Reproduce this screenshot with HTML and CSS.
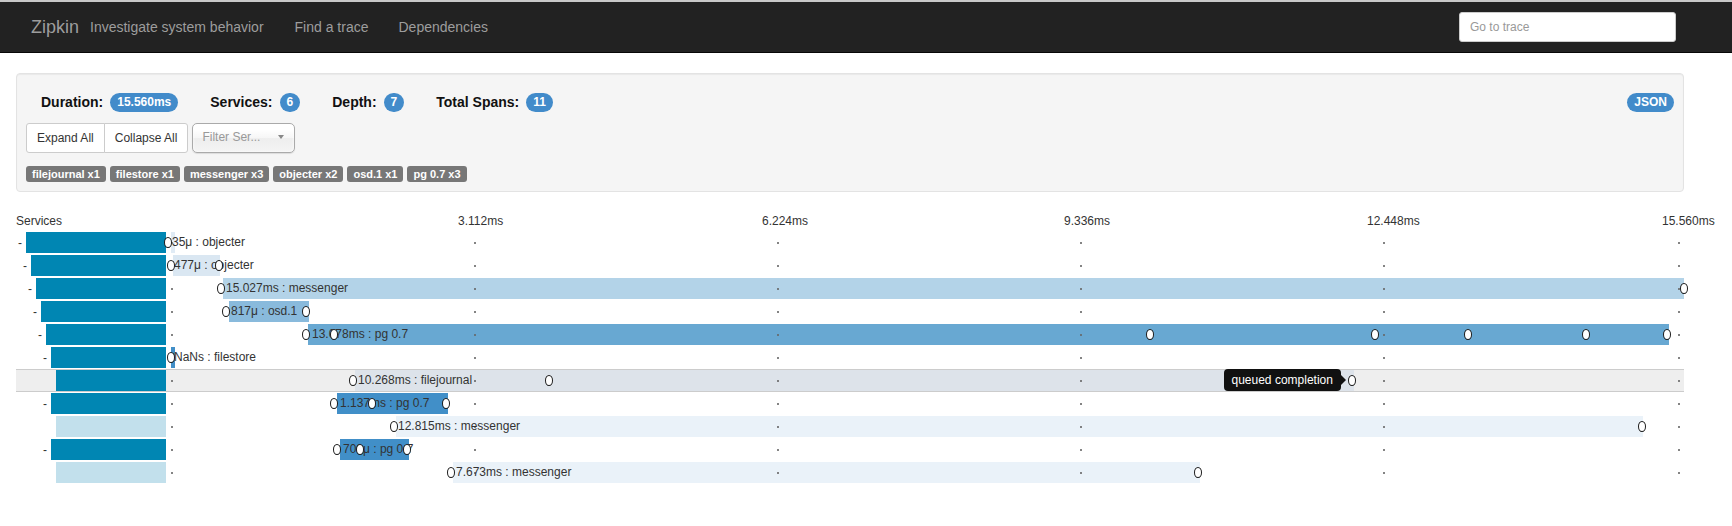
FILE: index.html
```html
<!DOCTYPE html>
<html lang="en">
<head>
<meta charset="utf-8">
<title>Zipkin</title>
<link rel="stylesheet" href="styles.css">
</head>
<body>
<header class="navbar">
  <a class="brand" href="#">Zipkin</a>
  <span class="tagline">Investigate system behavior</span>
  <nav class="nav-links"><a href="#">Find a trace</a><a href="#">Dependencies</a></nav>
  <input class="goto" type="text" placeholder="Go to trace">
</header>

<main class="page">
  <section class="summary">
    <div class="stats">
      <div class="stat">Duration:<span class="badge">15.560ms</span></div>
      <div class="stat">Services:<span class="badge">6</span></div>
      <div class="stat">Depth:<span class="badge">7</span></div>
      <div class="stat">Total Spans:<span class="badge">11</span></div>
      <a class="badge json" href="#">JSON</a>
    </div>
    <div class="controls">
      <div class="btn-group"><button class="btn">Expand All</button><button class="btn">Collapse All</button></div>
      <div class="filter"><span class="filter-text">Filter Ser...</span><span class="caret"></span></div>
    </div>
    <div class="tags">
      <span class="tag">filejournal x1</span>
      <span class="tag">filestore x1</span>
      <span class="tag">messenger x3</span>
      <span class="tag">objecter x2</span>
      <span class="tag">osd.1 x1</span>
      <span class="tag">pg 0.7 x3</span>
    </div>
  </section>

  <section class="trace">
    <div class="trace-head">
      <div class="svc-col">Services</div>
      <div class="canvas">
        <span class="tick-label" style="left:292px">3.112ms</span>
        <span class="tick-label" style="left:596px">6.224ms</span>
        <span class="tick-label" style="left:898px">9.336ms</span>
        <span class="tick-label" style="left:1201px">12.448ms</span>
        <span class="tick-label" style="left:1496px">15.560ms</span>
      </div>
    </div>

    <div class="row">
      <div class="svc"><span class="dash">-</span><span class="svc-bar" style="--d:0"></span></div>
      <div class="canvas">
        <span class="span-bar tone-a" style="left:5px;width:4px"></span>
        <span class="span-label" style="left:6px">35μ : objecter</span>
        <i class="ann" style="left:2px"></i>
      </div>
    </div>

    <div class="row">
      <div class="svc"><span class="dash">-</span><span class="svc-bar" style="--d:1"></span></div>
      <div class="canvas">
        <span class="span-bar tone-b" style="left:7px;width:47px"></span>
        <span class="span-label" style="left:8px">477μ : objecter</span>
        <i class="ann" style="left:4.5px"></i><i class="ann" style="left:52.5px"></i>
      </div>
    </div>

    <div class="row">
      <div class="svc"><span class="dash">-</span><span class="svc-bar" style="--d:2"></span></div>
      <div class="canvas">
        <span class="span-bar tone-c" style="left:57px;width:1461px"></span>
        <span class="span-label" style="left:60px">15.027ms : messenger</span>
        <i class="ann" style="left:54.5px"></i><i class="ann" style="left:1517.5px"></i>
      </div>
    </div>

    <div class="row">
      <div class="svc"><span class="dash">-</span><span class="svc-bar" style="--d:3"></span></div>
      <div class="canvas">
        <span class="span-bar tone-d" style="left:63px;width:80px"></span>
        <span class="span-label" style="left:65px">817μ : osd.1</span>
        <i class="ann" style="left:60px"></i><i class="ann" style="left:140px"></i>
      </div>
    </div>

    <div class="row">
      <div class="svc"><span class="dash">-</span><span class="svc-bar" style="--d:4"></span></div>
      <div class="canvas">
        <span class="span-bar tone-e" style="left:142px;width:1361px"></span>
        <span class="span-label" style="left:146px">13.078ms : pg 0.7</span>
        <i class="ann" style="left:139.5px"></i><i class="ann" style="left:167.5px"></i><i class="ann" style="left:984px"></i><i class="ann" style="left:1208.7px"></i><i class="ann" style="left:1301.7px"></i><i class="ann" style="left:1420px"></i><i class="ann" style="left:1500.7px"></i>
      </div>
    </div>

    <div class="row">
      <div class="svc"><span class="dash">-</span><span class="svc-bar" style="--d:5"></span></div>
      <div class="canvas">
        <span class="span-bar tone-f" style="left:5px;width:4px"></span>
        <span class="span-label" style="left:8px">NaNs : filestore</span>
        <i class="ann" style="left:4.5px"></i>
      </div>
    </div>

    <div class="row hover">
      <div class="svc"><span class="svc-bar" style="--d:6"></span></div>
      <div class="canvas">
        <span class="span-bar tone-h" style="left:189px;width:999px"></span>
        <span class="span-label" style="left:192px">10.268ms : filejournal</span>
        <i class="ann" style="left:186.5px"></i><i class="ann" style="left:383px"></i><i class="ann" style="left:1185.8px"></i>
        <span class="tip" style="left:1057.5px">queued completion</span>
      </div>
    </div>

    <div class="row">
      <div class="svc"><span class="dash">-</span><span class="svc-bar" style="--d:5"></span></div>
      <div class="canvas">
        <span class="span-bar tone-f" style="left:171px;width:111px"></span>
        <span class="span-label" style="left:174px">1.137ms : pg 0.7</span>
        <i class="ann" style="left:168px"></i><i class="ann" style="left:206px"></i><i class="ann" style="left:280px"></i>
      </div>
    </div>

    <div class="row">
      <div class="svc"><span class="svc-bar light" style="--d:6"></span></div>
      <div class="canvas">
        <span class="span-bar tone-g" style="left:230px;width:1247px"></span>
        <span class="span-label" style="left:232px">12.815ms : messenger</span>
        <i class="ann" style="left:227.5px"></i><i class="ann" style="left:1475.6px"></i>
      </div>
    </div>

    <div class="row">
      <div class="svc"><span class="dash">-</span><span class="svc-bar" style="--d:5"></span></div>
      <div class="canvas">
        <span class="span-bar tone-f" style="left:174px;width:69px"></span>
        <span class="span-label" style="left:177px">700μ : pg 0.7</span>
        <i class="ann" style="left:170.7px"></i><i class="ann" style="left:194px"></i><i class="ann" style="left:241px"></i>
      </div>
    </div>

    <div class="row">
      <div class="svc"><span class="svc-bar light" style="--d:6"></span></div>
      <div class="canvas">
        <span class="span-bar tone-g" style="left:287px;width:747px"></span>
        <span class="span-label" style="left:290px">7.673ms : messenger</span>
        <i class="ann" style="left:284.5px"></i><i class="ann" style="left:1032px"></i>
      </div>
    </div>
  </section>
</main>
</body>
</html>
```

FILE: styles.css
```css
* { box-sizing: border-box; }
html, body { margin: 0; }
body {
  font-family: "Liberation Sans", Arial, Helvetica, sans-serif;
  font-size: 14px;
  color: #333;
  background: #fff;
}

/* ---------- navbar ---------- */
.navbar {
  display: flex;
  align-items: center;
  height: 53px;
  background: #222;
  border-top: 2px solid #c8c8c8;
  border-bottom: 1px solid #080808;
  padding-left: 31px;
  margin-bottom: 20px;
}
.brand {
  font-size: 18px;
  line-height: 20px;
  color: #9d9d9d;
  text-decoration: none;
}
.tagline { margin-left: 11px; color: #9d9d9d; }
.nav-links { display: flex; gap: 30px; margin-left: 31px; }
.nav-links a { color: #9d9d9d; text-decoration: none; }
.goto {
  margin-left: auto;
  margin-right: 56px;
  width: 217px;
  height: 30px;
  padding: 0 10px;
  border: 1px solid #ccc;
  border-radius: 3px;
  background: #fff;
  font: 12px "Liberation Sans", Arial, sans-serif;
  color: #555;
  outline: none;
}
.goto::placeholder { color: #999; }

/* ---------- page ---------- */
.page { margin: 0 48px 0 16px; }

.summary {
  background: #f5f5f5;
  border: 1px solid #e3e3e3;
  border-radius: 4px;
  box-shadow: inset 0 1px 1px rgba(0, 0, 0, .05);
  padding: 18px 9px 9px;
  margin-bottom: 19px;
}
.stats {
  display: flex;
  align-items: center;
  height: 20px;
  padding-left: 15px;
}
.stat {
  display: flex;
  align-items: center;
  font-size: 14px;
  font-weight: bold;
  color: #111;
  margin-right: 32px;
}
.badge {
  display: inline-block;
  margin-left: 7px;
  padding: 3px 7px;
  font-size: 12px;
  font-weight: bold;
  line-height: 13px;
  color: #fff;
  background: #428bca;
  border-radius: 10px;
  text-decoration: none;
}
.json { margin-left: auto; }

.controls { display: flex; height: 30px; margin-top: 11px; }
.btn-group { display: flex; }
.btn {
  height: 30px;
  padding: 0 10px;
  font: 12px "Liberation Sans", Arial, sans-serif;
  color: #333;
  background: #fff;
  border: 1px solid #ccc;
}
.btn:first-child { border-radius: 3px 0 0 3px; }
.btn + .btn { margin-left: -1px; border-radius: 0 3px 3px 0; }
.filter {
  position: relative;
  display: flex;
  align-items: center;
  width: 103px;
  height: 30px;
  margin-left: 4px;
  padding: 0 0 3px 9px;
  border: 1px solid #aaa;
  border-radius: 5px;
  background: linear-gradient(#fff 20%, #f6f6f6 50%, #eee 52%, #f4f4f4 100%);
  box-shadow: 0 0 3px #fff inset, 0 1px 1px rgba(0, 0, 0, .1);
  font-size: 12px;
  color: #999;
}
.filter-text { white-space: nowrap; }
.caret {
  position: absolute;
  right: 10px;
  top: 11px;
  border-left: 3px solid transparent;
  border-right: 3px solid transparent;
  border-top: 4px solid #888;
}

.tags { display: flex; gap: 4px; margin-top: 13px; }
.tag {
  height: 16px;
  line-height: 16px;
  padding: 0 6px;
  font-size: 11px;
  font-weight: bold;
  color: #fff;
  background: #777;
  border-radius: 3px;
}

/* ---------- trace timeline ---------- */
.trace { font-size: 12px; }
.trace-head { display: flex; height: 20px; line-height: 20px; }
.svc-col { width: 150px; }
.canvas { position: relative; flex: 1; }
.tick-label { position: absolute; top: 0; white-space: nowrap; }

.row { display: flex; height: 23px; }
.row.hover {
  background: #eee;
  box-shadow: inset 0 1px #ccc, inset 0 -1px #ccc;
}
.svc {
  width: 150px;
  display: flex;
  align-items: center;
  justify-content: flex-end;
}
.dash { margin-right: 4px; line-height: 1; color: #333; }
.svc-bar {
  width: calc(140px - var(--d) * 5px);
  height: 21px;
  background: #0086b3;
}
.svc-bar.light { background: #c2e0ec; }

.row .canvas::before {
  content: "";
  position: absolute;
  left: 0;
  top: 11px;
  width: 1520px;
  height: 2px;
  z-index: 2;
  background:
    linear-gradient(#666, #666) 5px 0 / 2px 2px no-repeat,
    linear-gradient(#666, #666) 308px 0 / 2px 2px no-repeat,
    linear-gradient(#666, #666) 611px 0 / 2px 2px no-repeat,
    linear-gradient(#666, #666) 914px 0 / 2px 2px no-repeat,
    linear-gradient(#666, #666) 1217px 0 / 2px 2px no-repeat,
    linear-gradient(#666, #666) 1512px 0 / 2px 2px no-repeat;
  opacity: .8;
}
.span-bar { position: absolute; top: 1px; height: 21px; z-index: 1; }
.span-label {
  position: absolute;
  top: 0;
  line-height: 23px;
  white-space: nowrap;
  color: #333;
  z-index: 3;
}
.ann {
  position: absolute;
  top: 6px;
  width: 8px;
  height: 11px;
  margin-left: -4px;
  border: 1.6px solid #1a1a1a;
  border-radius: 50%;
  background: #fff;
  z-index: 4;
}
.tip {
  position: absolute;
  top: 0;
  height: 22px;
  line-height: 22px;
  padding: 0 8px;
  background: #111;
  color: #fff;
  border-radius: 4px;
  white-space: nowrap;
  z-index: 5;
}
.tip::after {
  content: "";
  position: absolute;
  right: -5px;
  top: 6px;
  border-style: solid;
  border-width: 5px 0 5px 5px;
  border-color: transparent transparent transparent #111;
}

.tone-a { background: #e0ebf5; }
.tone-b { background: #dae7f2; }
.tone-c { background: #b3d3e8; }
.tone-d { background: #89badc; }
.tone-e { background: #68a8d2; }
.tone-f { background: #418fc8; }
.tone-g { background: #eaf2f9; }
.tone-h { background: #dde3ea; }
```
